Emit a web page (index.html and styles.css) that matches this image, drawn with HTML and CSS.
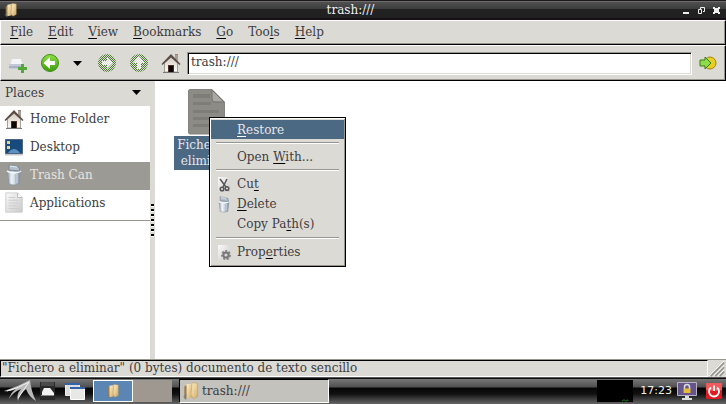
FILE: index.html
```
<!DOCTYPE html>
<html lang="en">
<head>
<meta charset="utf-8">
<title>trash:///</title>
<link rel="stylesheet" href="styles.css">
</head>
<body>
<svg class="defs" aria-hidden="true">
  <defs>
    <linearGradient id="fold" x1="0" x2="1" y1="0" y2="1"><stop offset="0" stop-color="#fff1c8"/><stop offset="1" stop-color="#d0aa68"/></linearGradient>
    <linearGradient id="green" x1="0" x2="0" y1="0" y2="1"><stop offset="0" stop-color="#8fe04a"/><stop offset="1" stop-color="#3c9a0c"/></linearGradient>
    <linearGradient id="wall" x1="0" x2="0" y1="0" y2="1"><stop offset="0" stop-color="#cfc8bd"/><stop offset="1" stop-color="#fffdf8"/></linearGradient>
    <linearGradient id="can" x1="0" x2="1"><stop offset="0" stop-color="#93a1b1"/><stop offset=".35" stop-color="#edf3f8"/><stop offset=".6" stop-color="#b5c2cf"/><stop offset="1" stop-color="#7d8ea0"/></linearGradient>
    <linearGradient id="paper" x1="0" x2="1" y1="0" y2="1"><stop offset="0" stop-color="#fafafa"/><stop offset="1" stop-color="#c9c9c9"/></linearGradient>
    <pattern id="dots" width="2" height="2" patternUnits="userSpaceOnUse"><path d="M0 0h1v1H0zM1 1h1v1H1z" fill="#dcdad5"/></pattern>
    <symbol id="folder" viewBox="0 0 16 18"><path d="M2 5l5-3v12l-5 2z" fill="#9a7c4c"/><path d="M1 14l5-4 1 4-4 3z" fill="#777" opacity=".6"/><path d="M4 3l5-1v13l-5 1z" fill="url(#fold)"/><path d="M9 1.500l5 .5v12l-4 2-2-4z" fill="url(#fold)" stroke="#b89862" stroke-width=".5"/></symbol>
    <symbol id="house" viewBox="0 0 20 20"><path d="M14 2h3v6h-3z" fill="#a59d97"/><path d="M14 1.500h3" stroke="#a77"/><path d="M3.500 10L10 3l6.500 7v9h-13z" fill="url(#wall)" stroke="#8f8a84" stroke-width=".8"/><path d="M10 1L.5 11l1 1L10 4.500l8.500 7.500 1-1z" fill="#5c4c45"/><path d="M7 12h6v7H7z" fill="#4a2c20"/><path d="M8 13h4v6H8z" fill="#0c0808"/><path d="M2 19.500h16" stroke="#777"/></symbol>
    <symbol id="trash" viewBox="1 0 16 22"><path d="M2.500 7h13l-1.500 13q-5 2-10 0z" fill="url(#can)" stroke="#7c8c9c" stroke-width=".5"/><path d="M6 10v9M9 10v10M12 10v9" stroke="#f4f8fb" opacity=".6"/><path d="M2 7q7 4 14 0" fill="none" stroke="#f1f5f8" stroke-width="2"/><path d="M4 1l10 2 1 4-11-1z" fill="#b4c0cb" stroke="#708294" stroke-width=".8"/><path d="M5 2l7 1" stroke="#e7eff6"/></symbol>
    <symbol id="sheet" viewBox="0 0 20 24"><path d="M1 1h13l5 5v16H1z" fill="url(#paper)" stroke="#cdcdcd"/><path d="M14 1v5h5" fill="#fff" stroke="#b5b5b5"/><path d="M4 6h7M4 9h11M4 12h11M4 15h9M4 18h11" stroke="#ccc"/></symbol>
  </defs>
</svg>
<div class="screen">
  <header class="titlebar">
    <svg class="i-small"><use href="#folder"/></svg>
    <h1>trash:///</h1>
    <div class="wm">
      <button aria-label="Minimize"><svg viewBox="0 0 7 7"><path d="M0 5h6v2H0z" fill="#eee"/></svg></button>
      <button aria-label="Restore window"><svg viewBox="0 0 7 7"><path d="M2.500 2V.5h4v4H5M.5 2.500h3v4h-3z" fill="none" stroke="#eee"/></svg></button>
      <button aria-label="Close"><svg viewBox="0 0 7 7"><path d="M0 0h2v1h3V0h2v2H6v3h1v2H5V6H2v1H0V5h1V2H0z" fill="#eee"/></svg></button>
    </div>
  </header>
  <nav class="menubar">
    <button><u>F</u>ile</button><button><u>E</u>dit</button><button><u>V</u>iew</button><button><u>B</u>ookmarks</button><button><u>G</u>o</button><button>Too<u>l</u>s</button><button><u>H</u>elp</button>
  </nav>
  <div class="toolbar">
    <button aria-label="New window"><svg class="i20" viewBox="0 0 20 20"><path d="M4 6h9l2 7H2z" fill="#f3f5f8"/><path d="M1 11h14v5H1z" fill="#c3cad6"/><path d="M1 14h12" stroke="#8e9bb0"/><path d="M13 11h3v3h3v3h-3v3h-3v-3h-3v-3h3z" fill="#53a83a"/></svg></button>
    <button aria-label="Back"><svg class="i20" viewBox="0 0 20 20"><circle cx="10" cy="10" r="8.500" fill="url(#green)" stroke="#3f8f12"/><path d="M3.500 10L10 4v4h5v4h-5v4z" fill="#fff"/></svg></button>
    <button class="history" aria-label="History"><svg viewBox="0 0 9 5"><path d="M0 0h9L4.500 5z"/></svg></button>
    <button aria-label="Forward" disabled><svg class="i20" viewBox="0 0 20 20"><circle cx="10" cy="10" r="9" fill="#4a7d32"/><path d="M16 10l-6-6v4H5v4h5v4z" fill="#fff"/><path d="M0 0h20v20H0z" fill="url(#dots)"/></svg></button>
    <button aria-label="Up" disabled><svg class="i20" viewBox="0 0 20 20"><circle cx="10" cy="10" r="9" fill="#4a7d32"/><path d="M10 3l-6 7h4v6h4v-6h4z" fill="#fff"/><path d="M0 0h20v20H0z" fill="url(#dots)"/></svg></button>
    <button aria-label="Home"><svg class="i20"><use href="#house"/></svg></button>
    <input type="text" aria-label="Location" value="trash:///">
    <button class="go" aria-label="Go to location"><svg viewBox="0 0 18 16"><circle cx="11" cy="8" r="6" fill="#e8ce22" stroke="#9c8610"/><path d="M1 5h5V2l6 6-6 6v-3H1z" fill="#8edc4e" stroke="#3b7d12"/></svg></button>
  </div>
  <main class="content">
    <aside class="side">
      <button class="side-head">Places<svg viewBox="0 0 9 5"><path d="M0 0h9L4.500 5z"/></svg></button>
      <ul class="places">
        <li><a href="#"><svg><use href="#house"/></svg>Home Folder</a></li>
        <li><a href="#"><svg viewBox="0 0 20 20"><path d="M1.500 2.500h17v14h-17z" fill="#174a7d" stroke="#4d6480"/><path d="M4 16q6-8 12 0z" fill="#5d91c0"/><path d="M3 4h3v3H3zM3 9h3v3H3z" fill="#e6d58b"/><path d="M1 17h18v1.500H1z" fill="#c5c9cd"/></svg>Desktop</a></li>
        <li><a href="#" class="current"><svg><use href="#trash"/></svg>Trash Can</a></li>
        <li><a href="#"><svg><use href="#sheet"/></svg>Applications</a></li>
      </ul>
    </aside>
    <div class="splitter"><i></i></div>
    <section class="files">
      <div class="file">
        <svg viewBox="0 0 37 46"><path d="M2 .5h22L36.500 13v30q0 2-2 2H2q-1.500 0-1.500-2V2Q.5.5 2 .5z" fill="#8d8b86" stroke="#85837e"/><path d="M24 1v9q0 3 3 3h9z" fill="#aaa8a2" stroke="#73716c"/><path d="M5 5h17v4H5zM5 13h18v3H5zM5 21h26v3H5zM5 28h26v3H5zM5 35h20v3H5z" fill="#7f7d78"/></svg>
        <span>Fichero a eliminar</span>
      </div>
      <div class="popup" role="menu">
        <button role="menuitem" class="active"><span><u>R</u>estore</span></button>
        <hr>
        <button role="menuitem"><span>Open <u>W</u>ith...</span></button>
        <hr>
        <button role="menuitem" class="tall"><svg viewBox="0 0 14 17"><path d="M1 1h9l3 3v12H1z" fill="url(#paper)"/><path d="M3 3l6 8M10 3l-4 8" stroke="#555" stroke-width="1.500"/><circle cx="5" cy="13" r="1.800" fill="none" stroke="#555" stroke-width="1.500"/><circle cx="10" cy="12.500" r="1.800" fill="none" stroke="#555" stroke-width="1.500"/></svg><span>Cu<u>t</u></span></button>
        <button role="menuitem" class="tall"><svg><use href="#trash"/></svg><span><u>D</u>elete</span></button>
        <button role="menuitem" class="tall"><span>Copy Pa<u>t</u>h(s)</span></button>
        <hr>
        <button role="menuitem" class="tall"><svg viewBox="0 0 14 17"><path d="M1 1h9l3 3v12H1z" fill="url(#paper)"/><circle cx="9" cy="11" r="4" fill="none" stroke="#888" stroke-width="2" stroke-dasharray="2 1.500"/><circle cx="9" cy="11" r="2.600" fill="none" stroke="#777" stroke-width="2"/></svg><span>Prop<u>e</u>rties</span></button>
      </div>
    </section>
  </main>
  <div class="status">
    <p>"Fichero a eliminar" (0 bytes) documento de texto sencillo</p>
    <svg viewBox="0 0 18 19"><path d="M2 18L17 3M7 18L17 8M12 18l5-5" stroke="#98968f" stroke-width="2"/><path d="M0 18L17 1M5 18L17 6M10 18l7-7" stroke="#fff"/></svg>
  </div>
  <footer class="taskbar">
    <button class="start" aria-label="Menu"><svg viewBox="0 0 32 24"><path d="M0 12Q13 8 26 1Q27 12 32 22Q25 18 22 10Q16 15 14 22Q12 15 17 10Q9 13 5 20Q7 13 12 10Q5 13 0 12z" fill="#b9b9b9"/><path d="M3 12Q15 9 25 3Q19 12 14 19" fill="none" stroke="#f3f3f3"/></svg></button>
    <button class="fm" aria-label="File manager"><svg viewBox="0 0 16 20"><path d="M0 1h15v18H0z" fill="#292929"/><path d="M1 1h13v4H1z" fill="#4a4a4a"/><path d="M2 11l2-4h6l4 5v2H2z" fill="#f3f3f3"/><path d="M1 14h13v1H1z" fill="#888"/></svg></button>
    <button class="wins" aria-label="Show desktop"><svg viewBox="0 0 20 20"><path d="M.5 2.500h14v12H.5z" fill="#ddd" stroke="#eee"/><path d="M0 2h15v2H0z" fill="#2f63ae"/><path d="M5.500 7.500h14v11h-14z" fill="#e8e8e6" stroke="#fff"/><path d="M5 6h15v2H5z" fill="#2f63ae"/></svg></button>
    <button class="desk on" aria-label="Desktop 1"><svg class="i-small"><use href="#folder"/></svg></button>
    <button class="desk" aria-label="Desktop 2"></button>
    <button class="task"><svg class="i-task"><use href="#folder"/></svg>trash:///</button>
    <span class="cpu"><svg viewBox="0 0 36 22"><path d="M25 21h1v-1h2v1h2v-1h1v1" fill="none" stroke="#176b17"/></svg></span>
    <time>17:23</time>
    <button class="lock" aria-label="Lock screen"><svg viewBox="0 0 20 20"><path d="M.5 1.500h19v13H.5z" fill="#65558a" stroke="#b9b4c4"/><path d="M7.500 8V6q0-2.500 2.500-2.500T12.500 6v2" fill="none" stroke="#ddd" stroke-width="1.500"/><path d="M6.500 7.500h7V12h-7z" fill="#e5bb38"/><path d="M8 15h4v2h3v2H5v-2h3z" fill="#ddd"/></svg></button>
    <button class="power" aria-label="Shut down"><svg viewBox="0 0 16 16"><rect width="16" height="16" rx="1" fill="#dd1c22"/><path d="M0 0h16v7Q8 9 0 7z" fill="#ef5a5c"/><path d="M5 4.500a5 5 0 1 0 6 0M8 2.500V8" fill="none" stroke="#fff" stroke-width="1.800"/></svg></button>
  </footer>
</div>
</body>
</html>
```
FILE: styles.css
```
* { box-sizing: border-box; }
body { margin: 0; font: 12px/16px "DejaVu Serif", serif; color: #3c3c40; }
button { font: inherit; color: inherit; background: none; border: 0; padding: 0; margin: 0; display: flex; align-items: center; text-align: left; }
svg { display: block; flex: none; }
u { text-decoration: underline 1px #000; text-underline-offset: 2px; }
.defs { position: absolute; width: 0; height: 0; }
.screen { display: flex; flex-direction: column; height: 100vh; }
.titlebar { display: flex; align-items: center; height: 20px; flex: none; padding: 0 6px 0 4px; background: linear-gradient(#1d181c 0 1px, #6c6c6c 1px 2px, #505050 2px, #3c3c3c 9px, #222 9px, #202020 18px, #171117 18px); color: #f0f0f0; }
.titlebar h1 { flex: 1; margin: 0; font: inherit; text-align: center; }
.i-small { width: 14px; height: 16px; }
.wm { display: flex; gap: 8px; }
.wm svg { width: 7px; height: 7px; }
.menubar, .toolbar { display: flex; align-items: center; flex: none; background: #dcdad5; border: 1px solid #000; border-left-color: #fff; border-top-color: #fff; box-shadow: inset -1px -1px #98968f; }
.menubar { height: 25px; gap: 15px; padding: 0 9px 2px; }
.toolbar { height: 36px; padding: 0 8px 0 7px; gap: 12px; }
.i20 { width: 20px; height: 20px; }
.history { padding: 0 3px 0 1px; }
.history svg, .side-head svg { width: 9px; height: 5px; }
.toolbar input { flex: 1; min-width: 0; height: 23px; margin-left: -6px; padding: 0 3px 2px; font: inherit; color: inherit; background: #fff; border: 1px solid #98968f; border-right-color: #fff; border-bottom-color: #fff; box-shadow: inset 1px 1px #000, inset -1px -1px #dcdad5; }
.go { margin-left: -5px; }
.go svg { width: 18px; height: 16px; }
.content { flex: 1; min-height: 0; display: flex; background: #fff; }
.side { width: 150px; flex: none; }
.side-head { width: 100%; height: 25px; padding: 0 9px 2px 5px; justify-content: space-between; background: #dcdad5; }
.places { list-style: none; margin: 0; padding: 0 0 2px; border-bottom: 1px solid #98968f; }
.places a { display: flex; align-items: center; gap: 6px; height: 28px; padding: 0 4px 2px; color: inherit; text-decoration: none; }
.places svg { width: 20px; height: 22px; }
.places .current { background: #9c9a94; color: #e8e4e2; }
.splitter { width: 5px; flex: none; display: flex; align-items: center; background: #dcdad5; }
.splitter i { width: 3px; height: 33px; margin-left: 1px; background: repeating-linear-gradient(#000 0 2px, #fff 2px 3px, transparent 3px 5px); }
.files { flex: 1; position: relative; padding: 8px 19px; }
.file { width: 64px; display: flex; flex-direction: column; align-items: center; gap: 1px; }
.file svg { width: 37px; height: 46px; }
.file span { width: 100%; padding: 1px 2px; text-align: center; background: #4b6983; color: #e8e6ee; }
.popup { position: absolute; left: 54px; top: 36px; width: 137px; padding: 2px 1px 4px; background: #dcdad5; border: 1px solid #000; box-shadow: inset 1px 1px #fff, inset -1px -1px #98968f; }
.popup button { width: 100%; height: 19px; padding-left: 26px; }
.popup .tall { height: 20px; }
.popup .active { background: #4b6983; color: #e8e6ee; }
.popup .active u { text-decoration-color: #fff; }
.popup svg { width: 14px; height: 17px; margin: 0 6px 0 -20px; }
.popup hr { height: 2px; margin: 3px 5px; border: 0; border-top: 1px solid #98968f; background: #fff; }
.status { display: flex; flex: none; height: 19px; background: #dcdad5; border-top: 1px solid #98968f; border-bottom: 1px solid #555; }
.status p { flex: 1; margin: 0; padding-left: 1px; line-height: 15px; border: 1px solid #000; border-right-color: #fff; border-bottom-color: #fff; }
.status svg { width: 18px; height: 17px; }
.taskbar { display: flex; align-items: center; flex: none; height: 26px; padding: 1px 4px; background: linear-gradient(#111 0 1px, #777 1px, #505050 9px, #050505 10px, #111 16px, #666); }
.start svg { width: 32px; height: 24px; }
.fm { margin-left: 4px; }
.fm svg { width: 16px; height: 20px; }
.wins { margin-left: 9px; }
.wins svg { width: 20px; height: 20px; }
.desk { width: 39px; height: 22px; justify-content: center; background: #9e9891; }
.desk.on { margin-left: 8px; width: 40px; background: #5b86b3; border: 1px solid #fff; }
.task { width: 150px; height: 24px; margin-left: 7px; padding-left: 2px; gap: 2px; background: #c4c2bd; border: 1px solid #000; border-right-color: #fff; border-bottom-color: #fff; }
.i-task { width: 18px; height: 20px; }
.cpu { width: 36px; height: 22px; margin-left: auto; background: #000; }
.taskbar time { margin-left: 7px; color: #f0f0e8; font-family: "DejaVu Sans", sans-serif; font-size: 11px; }
.lock { margin-left: 5px; }
.lock svg { width: 20px; height: 20px; }
.power { margin-left: 9px; }
.power svg { width: 16px; height: 16px; }
```
